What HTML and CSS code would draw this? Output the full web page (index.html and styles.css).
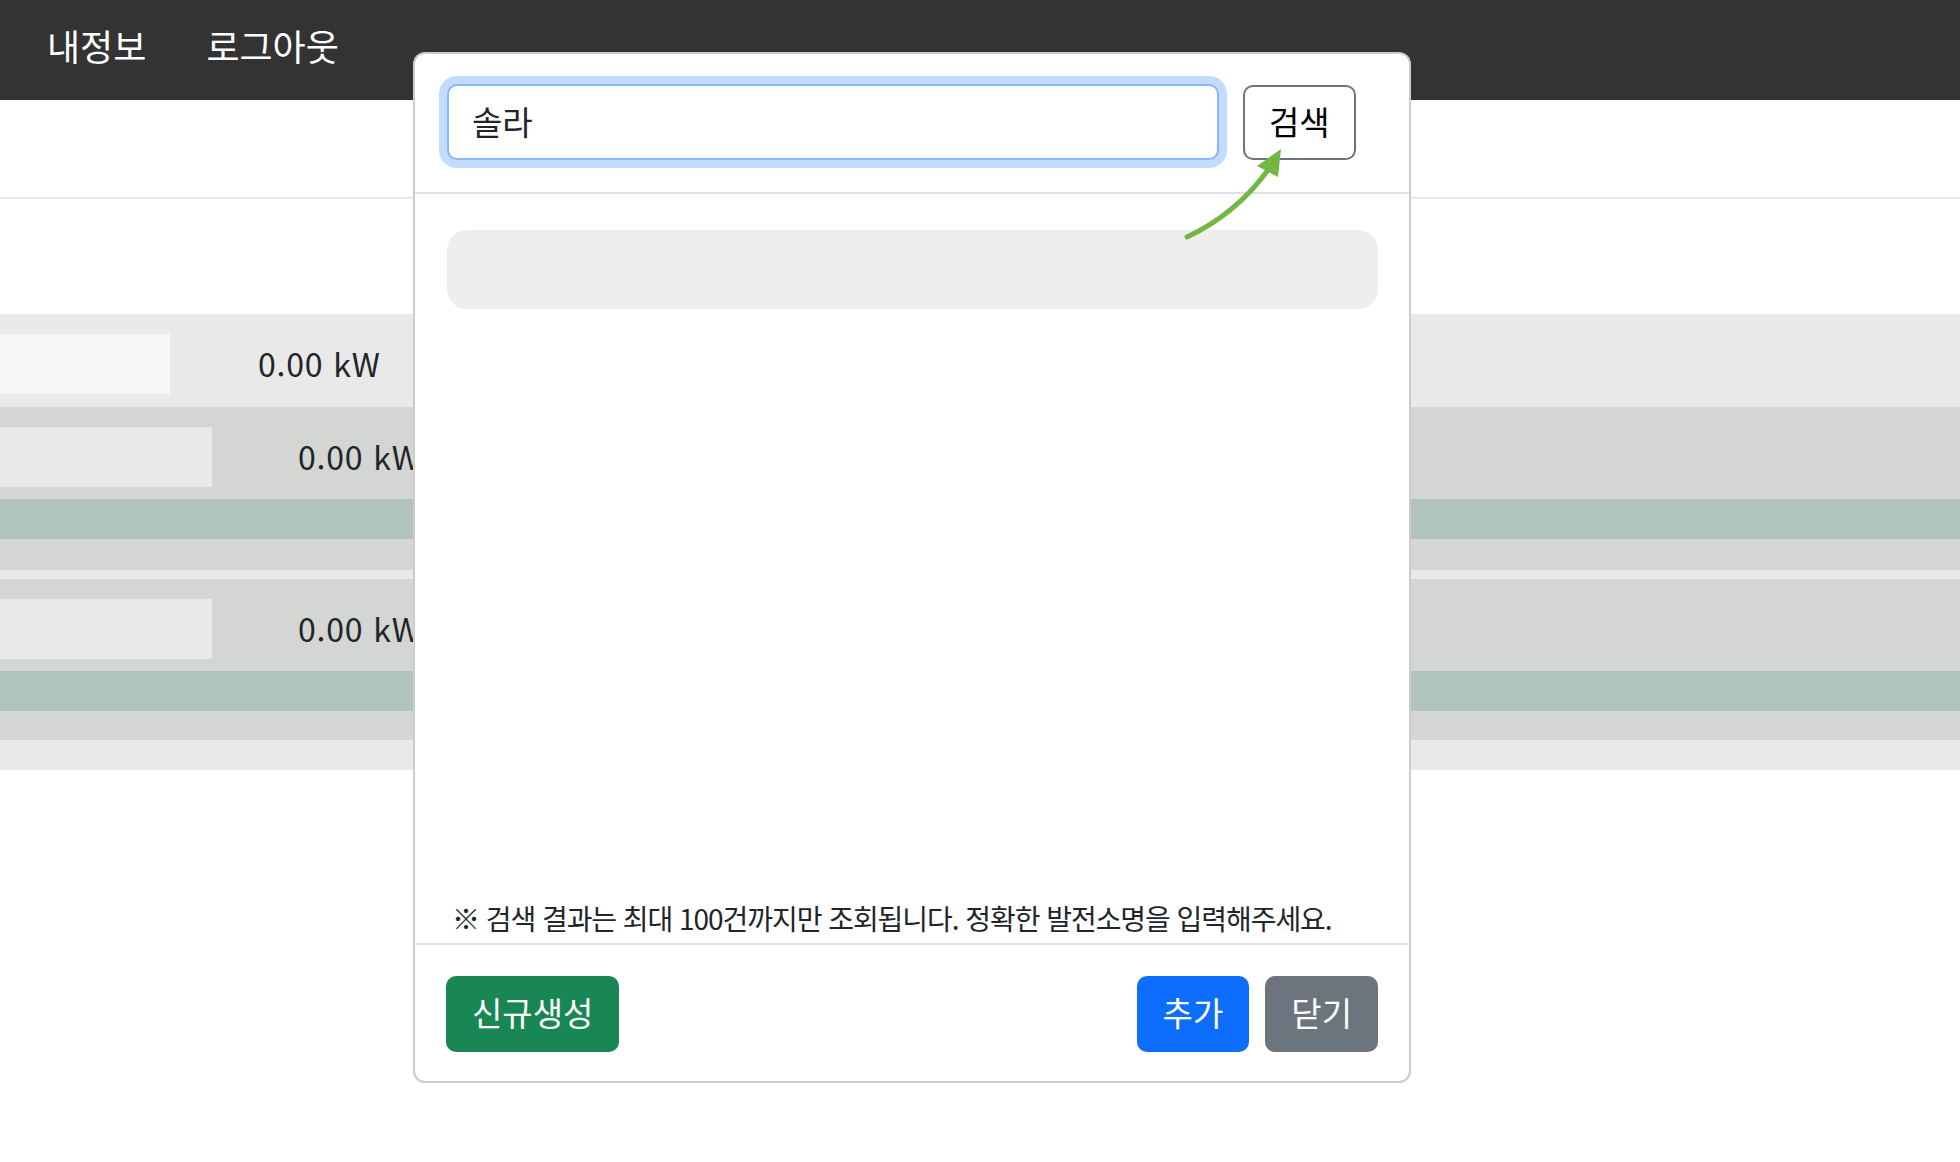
FILE: index.html
```html
<!DOCTYPE html>
<html lang="ko">
<head>
<meta charset="utf-8">
<title>발전소 검색</title>
<link rel="stylesheet" href="styles.css">
</head>
<body>
  <header class="topbar">
    <nav class="topnav">
      <a class="topnav-link" href="#">내정보</a>
      <a class="topnav-link" href="#">로그아웃</a>
    </nav>
  </header>
  <div class="subbar"></div>
  <main class="content">
    <div class="row row-light">
      <div class="cell-box cell-box-a"></div>
      <span class="kw kw-a">0.00 kW</span>
    </div>
    <div class="row row-mid">
      <div class="cell-box cell-box-b"></div>
      <span class="kw kw-b">0.00 kW</span>
    </div>
    <div class="band band-green"></div>
    <div class="band band-mid band-31"></div>
    <div class="band band-light band-9"></div>
    <div class="row row-mid">
      <div class="cell-box cell-box-b"></div>
      <span class="kw kw-b">0.00 kW</span>
    </div>
    <div class="band band-green"></div>
    <div class="band band-mid band-29"></div>
    <div class="band band-light band-30"></div>
  </main>

  <div class="modal">
    <div class="modal-header">
      <input class="search-input" type="text" value="솔라">
      <button class="btn btn-outline">검색</button>
    </div>
    <div class="modal-body">
      <div class="result-bar"></div>
      <p class="note">※ 검색 결과는 최대 100건까지만 조회됩니다. 정확한 발전소명을 입력해주세요.</p>
    </div>
    <div class="modal-footer">
      <button class="btn btn-success">신규생성</button>
      <button class="btn btn-primary btn-push">추가</button>
      <button class="btn btn-secondary">닫기</button>
    </div>
  </div>

  <svg class="arrow" width="120" height="110" viewBox="1180 140 120 110" xmlns="http://www.w3.org/2000/svg">
    <path d="M1187 237 Q1236 214 1268 170" fill="none" stroke="#72b743" stroke-width="5" stroke-linecap="round"/>
    <polygon points="1281,149 1257,166 1278,177" fill="#72b743"/>
  </svg>
</body>
</html>
```

FILE: styles.css
```css
* {
  box-sizing: border-box;
}

html, body {
  margin: 0;
  padding: 0;
}

body {
  font-family: "Noto Sans CJK KR", "Noto Sans", sans-serif;
  color: #212529;
  background: #ffffff;
  width: 1960px;
  height: 1162px;
  overflow: hidden;
  position: relative;
}

.topbar {
  height: 100px;
  background: #333333;
  display: flex;
  align-items: center;
}

.topnav {
  display: flex;
  gap: 60px;
  padding-left: 47px;
  margin-top: -10px;
}

.topnav-link {
  color: #ffffff;
  text-decoration: none;
  font-size: 36px;
  line-height: 48px;
}

.subbar {
  height: 99px;
  border-bottom: 2px solid #e6e6e6;
}

.content {
  padding-top: 115px;
}

.row {
  height: 93px;
  padding-top: 20px;
  display: flex;
  align-items: flex-start;
}

.row-mid {
  height: 92px;
}

.row-light {
  background: #e8e9e8;
}

.row-mid {
  background: #d3d6d3;
}

.cell-box {
  height: 60px;
}

.cell-box-a {
  width: 170px;
  background: #f5f6f5;
}

.cell-box-b {
  width: 212px;
  background: #e8e9e8;
}

.kw {
  font-size: 32px;
  line-height: 58px;
  letter-spacing: 0.8px;
  color: #212529;
}

.kw-a {
  margin-left: 88px;
}

.kw-b {
  margin-left: 86px;
}

.band-green {
  height: 40px;
  background: #b0c4bb;
}

.band-mid {
  background: #d3d6d3;
}

.band-light {
  background: #e8e9e8;
}

.band-31 { height: 31px; }
.band-9 { height: 9px; }
.band-29 { height: 29px; }
.band-30 { height: 30px; }

/* modal */
.modal {
  position: absolute;
  left: 413px;
  top: 52px;
  width: 998px;
  height: 1031px;
  background: #ffffff;
  border: 2px solid rgba(0, 0, 0, 0.2);
  border-radius: 12px;
  display: flex;
  flex-direction: column;
}

.modal-header {
  display: flex;
  align-items: center;
  gap: 24px;
  padding: 30px 32px 32px 32px;
  border-bottom: 2px solid #dee2e6;
}

.search-input {
  width: 772px;
  height: 76px;
  border: 2px solid #86b7fe;
  border-radius: 10px;
  padding: 0 23px 2px 23px;
  font-family: inherit;
  font-size: 33px;
  color: #212529;
  background: #ffffff;
  outline: none;
  box-shadow: 0 0 0 8px rgba(13, 110, 253, 0.25);
}

.btn {
  font-family: inherit;
  font-size: 33px;
  line-height: 48px;
  padding: 10px 24px 14px 24px;
  border: 2px solid transparent;
  border-radius: 10px;
  color: #ffffff;
  cursor: pointer;
}

.btn-outline {
  background: #ffffff;
  color: #000000;
  border-color: #6c757d;
  height: 75px;
  padding: 0 24px 3px 24px;
}

.btn-success {
  background: #198754;
}

.btn-primary {
  background: #0d6efd;
}

.btn-secondary {
  background: #6c757d;
}

.modal-body {
  flex: 1;
  display: flex;
  flex-direction: column;
  padding: 36px 31px 0 32px;
}

.result-bar {
  height: 79px;
  background: #eeeeee;
  border-radius: 20px;
}

.note {
  margin: auto 0 5px 0;
  padding-left: 5px;
  font-size: 28px;
  line-height: 40px;
  letter-spacing: -1.05px;
  color: #212529;
}

.modal-footer {
  display: flex;
  align-items: center;
  gap: 16px;
  padding: 31px 31px 29px 31px;
  border-top: 2px solid #dee2e6;
}

.btn-push {
  margin-left: auto;
}

.arrow {
  position: absolute;
  left: 1180px;
  top: 140px;
  overflow: visible;
}
```
